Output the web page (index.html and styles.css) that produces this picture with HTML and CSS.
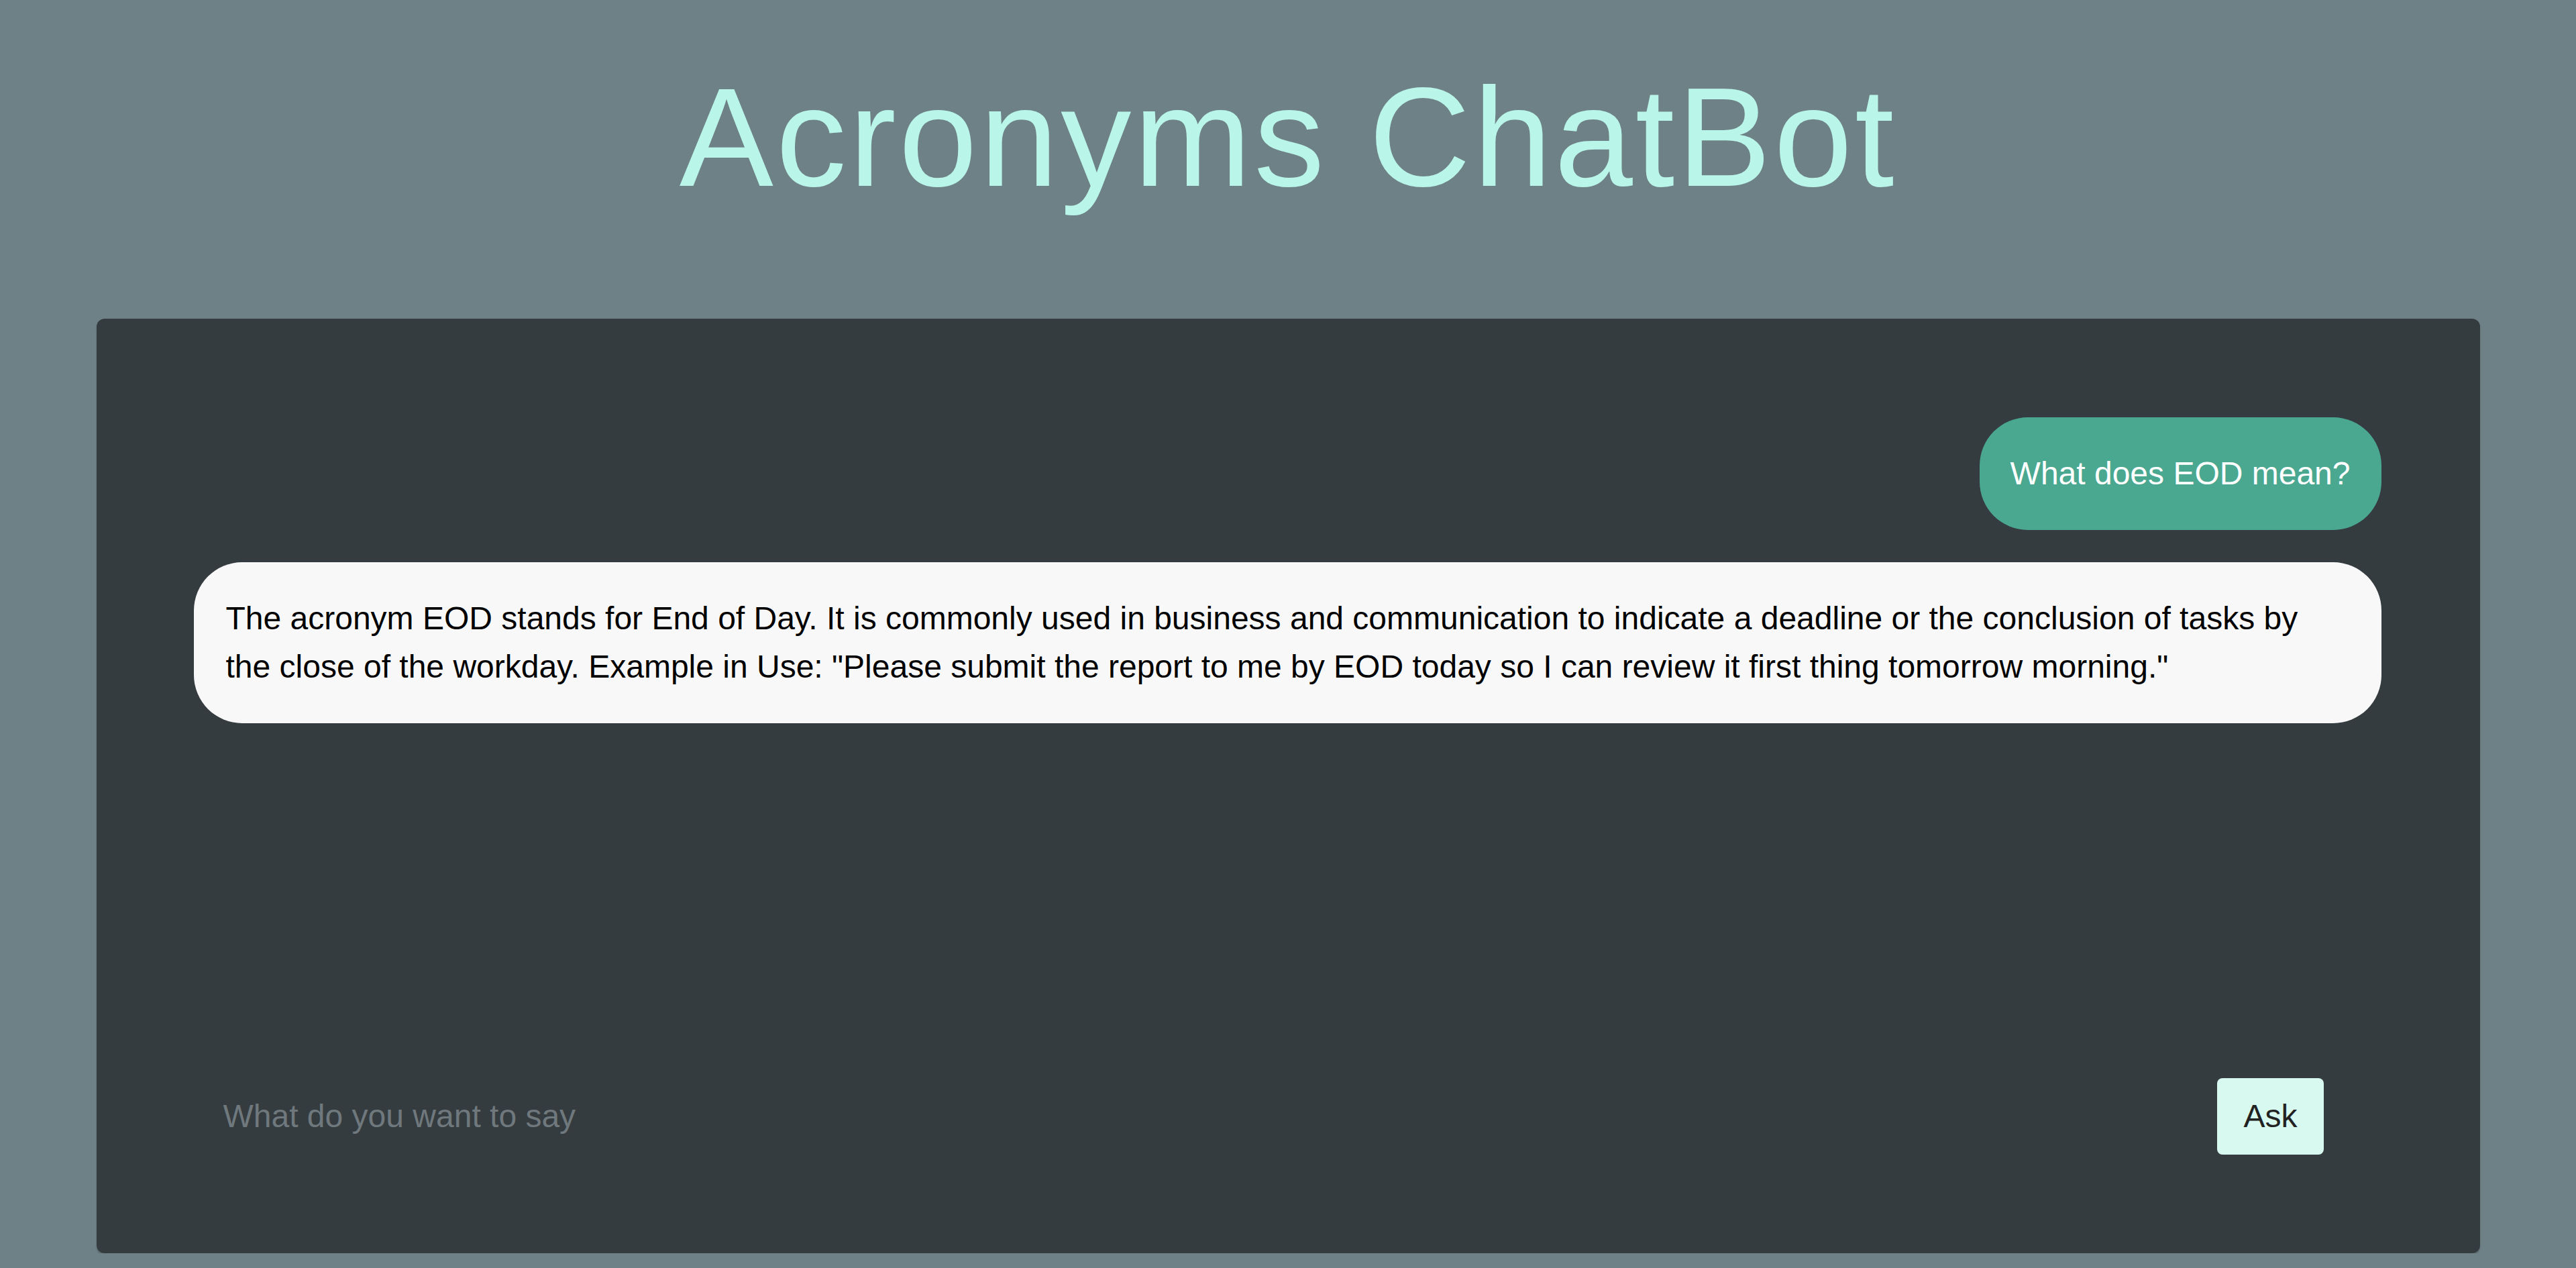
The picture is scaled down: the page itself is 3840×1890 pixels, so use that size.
FILE: index.html
```html
<!DOCTYPE html>
<html lang="en">
<head>
<meta charset="utf-8">
<title>Acronyms ChatBot</title>
<link rel="stylesheet" href="styles.css">
</head>
<body>
  <h1 class="title">Acronyms ChatBot</h1>
  <main class="chat-card">
    <div class="messages">
      <div class="msg msg-user">What does EOD mean?</div>
      <div class="msg msg-bot">The acronym EOD stands for End of Day. It is commonly used in business and communication to indicate a deadline or the conclusion of tasks by the close of the workday. Example in Use: "Please submit the report to me by EOD today so I can review it first thing tomorrow morning."</div>
    </div>
    <form class="ask-form">
      <input class="ask-input" type="text" placeholder="What do you want to say">
      <button class="ask-btn" type="button">Ask</button>
    </form>
  </main>
</body>
</html>
```

FILE: styles.css
```css
* { box-sizing: border-box; }

html, body {
  margin: 0;
  padding: 0;
}

body {
  background: #6e8187;
  font-family: "Liberation Sans", Arial, sans-serif;
  overflow: hidden;
}

.title {
  margin: 100px 0 0;
  font-size: 210px;
  line-height: 1;
  height: 210px;
  font-weight: 400;
  text-align: center;
  color: #b9f5e8;
  letter-spacing: 4px;
}

.chat-card {
  width: 3553px;
  height: 1393px;
  margin: 165px auto 0;
  padding: 147px 147px 147px 145px;
  background: #353c3f;
  border-radius: 12px;
  box-shadow: 0 3px 2px rgba(0, 0, 0, 0.18);
  display: flex;
  flex-direction: column;
  justify-content: space-between;
}

.messages {
  display: flex;
  flex-direction: column;
  align-items: flex-end;
  gap: 48px;
}

.msg {
  font-size: 48px;
  line-height: 72px;
  padding: 48px;
  border-radius: 72px;
}

.msg-user {
  background: #4aa891;
  color: #ffffff;
  padding: 48px 46px;
}

.msg-bot {
  align-self: stretch;
  background: #f8f8f8;
  color: #000000;
}

.ask-form {
  display: flex;
  align-items: center;
  padding-right: 86px;
  margin: 0;
}

.ask-input {
  flex: 1;
  background: transparent;
  border: none;
  outline: none;
  font-family: inherit;
  font-size: 48px;
  line-height: 54px;
  padding: 0 0 0 44px;
  color: #e8e8e8;
}

.ask-input::placeholder {
  color: #6f787d;
}

.ask-btn {
  font-family: inherit;
  font-size: 48px;
  line-height: 54px;
  padding: 30px 39px;
  border: none;
  border-radius: 8px;
  background: #d8f9f0;
  color: #222222;
  cursor: pointer;
}
```
